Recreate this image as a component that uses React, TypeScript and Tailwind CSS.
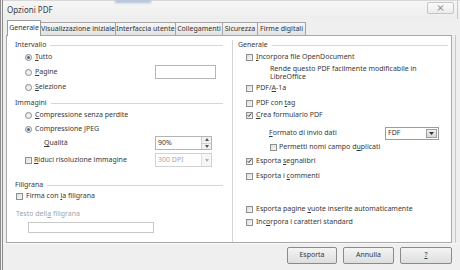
import React from 'react';

const Radio: React.FC<{ on?: boolean }> = ({ on }) => (
  <span className="w-[7px] h-[7px] rounded-full border border-[#8a8a8a] bg-gradient-to-br from-[#e4e4e4] to-[#fafafa] flex items-center justify-center shrink-0">
    {on && <span className="w-[3px] h-[3px] rounded-full bg-[#4a6384]" />}
  </span>
);

const Check: React.FC<{ on?: boolean; dim?: boolean }> = ({ on, dim }) => (
  <span className={`w-[7px] h-[7px] border ${dim ? 'border-[#b8b8b8]' : 'border-[#8e8f8f]'} bg-gradient-to-br from-[#dedede] to-[#f7f7f7] flex items-center justify-center shrink-0`}>
    {on && (
      <svg width="6" height="6" viewBox="0 0 6 6">
        <path d="M0.8 3.2 L2.3 4.7 L5.2 1" stroke="#333" strokeWidth="1.1" fill="none" />
      </svg>
    )}
  </span>
);

const Heading: React.FC<{ label: string; className?: string }> = ({ label, className }) => (
  <div className={`h-[10px] flex items-center ${className || ''}`}>
    <span>{label}</span>
    <span className="flex-1 h-px bg-[#d6d6d6] ml-[4px]" />
  </div>
);

const U: React.FC<{ children: React.ReactNode }> = ({ children }) => <span className="underline underline-offset-[1px]">{children}</span>;

const TabBtn: React.FC<{ label: string; active?: boolean; w: string }> = ({ label, active, w }) =>
  active ? (
    <div className={`${w} h-[16px] -mb-px relative z-10 bg-white border border-b-0 border-[#9a9a9a] flex items-center justify-center`}>
      {label}
    </div>
  ) : (
    <div className={`${w} h-[13px] -ml-px bg-gradient-to-b from-[#f6f6f6] to-[#e2e2e2] border border-b-0 border-[#a6a6a6] flex items-center justify-center`}>
      {label}
    </div>
  );

const Button: React.FC<{ children: React.ReactNode; w: string }> = ({ children, w }) => (
  <div className={`${w} h-[17px] rounded-[2px] border border-[#8a8a8a] bg-gradient-to-b from-[#f4f4f4] to-[#dedede] flex items-center justify-center`}>
    {children}
  </div>
);

export default function App() {
  return (
    <div
      className="w-[460px] h-[270px] bg-[#efefef] flex flex-col border-l-[3px] border-double border-[#8c8c8c] text-[7px] text-[#383838] overflow-hidden"
      style={{ fontFamily: '"Noto Sans", "DejaVu Sans", sans-serif' }}
    >
      {/* title bar */}
      <div className="h-[19px] relative flex items-center justify-between pl-[4px] pr-[2px] border-t border-[#d8d8d8] bg-gradient-to-b from-[#f6f6f6] to-[#ededed]">
        <span className="absolute left-[112px] top-[-1px] w-[36px] h-[3px] bg-[#a9bfdc] blur-[1px]" />
        <span className="text-[8px] text-[#3a3a3a]">Opzioni PDF</span>
        <div className="flex items-start h-full">
          <div className="w-[27px] h-[12px] mt-[1px] rounded-[2px] border border-[#c4c4c4] bg-gradient-to-b from-[#fbfbfb] to-[#ececec] flex items-center justify-center">
            <svg width="7" height="6" viewBox="0 0 7 6">
              <path d="M1 0.5 L6 5.5 M6 0.5 L1 5.5" stroke="#6a6a6a" strokeWidth="1" />
              <path d="M2 0.5 L6 4.5 M5 0.5 L1 4.5" stroke="#b8b8b8" strokeWidth="0.6" />
            </svg>
          </div>
          <span className="w-px h-full ml-[3px] bg-[#c8c8c8]" />
        </div>
      </div>

      {/* tabs + page */}
      <div className="flex-1 flex flex-col pl-[3px] pr-[4px]">
        <div className="h-[16px] flex items-end pl-px pr-[4px] text-[#333]">
          <TabBtn label="Generale" active w="w-[34px]" />
          <TabBtn label="Visualizzazione iniziale" w="w-[76px]" />
          <TabBtn label="Interfaccia utente" w="w-[61px]" />
          <TabBtn label="Collegamenti" w="w-[48px]" />
          <TabBtn label="Sicurezza" w="w-[36px]" />
          <TabBtn label="Firme digitali" w="w-[49px]" />
        </div>

        <div className="h-[208px] flex">
          <div className="flex-1 bg-white border border-[#a8a8a8] flex">
            {/* left column */}
            <div className="w-[225px] flex flex-col pl-[8px] pr-[9px]">
              <Heading label="Intervallo" className="mt-[4px]" />
              <div className="h-[10px] mt-[2px] flex items-center pl-[10px] gap-[3px]">
                <Radio on />
                <span><U>T</U>utto</span>
              </div>
              <div className="h-[14px] mt-[3px] flex items-center pl-[10px] gap-[3px]">
                <Radio />
                <span><U>P</U>agine</span>
                <span className="ml-auto mr-[7px] w-[61px] h-[14px] border border-[#b5b5b5] bg-white" />
              </div>
              <div className="h-[10px] mt-[3px] flex items-center pl-[10px] gap-[3px]">
                <Radio />
                <span><U>S</U>elezione</span>
              </div>

              <Heading label="Immagini" className="mt-[6px]" />
              <div className="h-[10px] mt-[2px] flex items-center pl-[10px] gap-[3px]">
                <Radio />
                <span><U>C</U>ompressione senza perdite</span>
              </div>
              <div className="h-[10px] mt-[4px] flex items-center pl-[10px] gap-[3px]">
                <Radio on />
                <span>Compressione <U>J</U>PEG</span>
              </div>
              <div className="h-[14px] mt-[2px] flex items-center pl-[29px]">
                <span><U>Q</U>ualità</span>
                <div className="ml-auto mr-[11px] w-[57px] h-[14px] border border-[#b5b5b5] bg-white flex">
                  <span className="flex-1 pl-[2px] flex items-center">90%</span>
                  <div className="w-[10px] border-l border-[#cfcfcf] flex flex-col">
                    <span className="flex-1 bg-[#f1f1f1] border-b border-[#d2d2d2] flex items-center justify-center">
                      <svg width="4" height="3" viewBox="0 0 4 3"><path d="M0 3 L2 0 L4 3Z" fill="#555" /></svg>
                    </span>
                    <span className="flex-1 bg-[#f1f1f1] flex items-center justify-center">
                      <svg width="4" height="3" viewBox="0 0 4 3"><path d="M0 0 L2 3 L4 0Z" fill="#555" /></svg>
                    </span>
                  </div>
                </div>
              </div>
              <div className="h-[14px] mt-[3px] flex items-center pl-[10px] gap-[2px]">
                <Check />
                <span><U>R</U>iduci risoluzione immagine</span>
                <div className="ml-auto mr-[11px] w-[57px] h-[14px] border border-[#d2d2d2] bg-white flex text-[#a8a8a8]">
                  <span className="flex-1 pl-[2px] flex items-center">300 DPI</span>
                  <span className="w-[10px] border-l border-[#dedede] bg-[#f6f6f6] flex items-center justify-center">
                    <svg width="4" height="3" viewBox="0 0 4 3"><path d="M0 0 L2 3 L4 0Z" fill="#b0b0b0" /></svg>
                  </span>
                </div>
              </div>

              <Heading label="Filigrana" className="mt-[13px]" />
              <div className="h-[10px] mt-[1px] flex items-center pl-[1px] gap-[3px]">
                <Check />
                <span>Firma con <U>l</U>a filigrana</span>
              </div>
              <div className="h-[10px] mt-[8px] flex items-center pl-[1px] text-[#a4a4a4]">
                <span>Testo dell<U>a</U> filigrana</span>
              </div>
              <span className="mt-[3px] ml-[13px] w-[126px] h-[11px] border border-[#c8c8c8] bg-white" />
            </div>

            <div className="w-px bg-[#d4d4d4] mt-[4px]" />

            {/* right column */}
            <div className="flex-1 flex flex-col pl-[5px] pr-[3px]">
              <Heading label="Generale" className="mt-[4px]" />
              <div className="h-[10px] mt-[2px] flex items-center pl-[8px] gap-[3px]">
                <Check />
                <span><U>I</U>ncorpora file OpenDocument</span>
              </div>
              <div className="mt-[3px] pl-[32px] leading-[8px]">
                <div>Rende questo PDF facilmente modificabile in</div>
                <div>LibreOffice</div>
              </div>
              <div className="h-[10px] mt-[2px] flex items-center pl-[8px] gap-[3px]">
                <Check />
                <span>PDF/<U>A</U>-1a</span>
              </div>
              <div className="h-[10px] mt-[5px] flex items-center pl-[8px] gap-[3px]">
                <Check />
                <span>PDF con <U>t</U>ag</span>
              </div>
              <div className="h-[10px] mt-[2px] flex items-center pl-[8px] gap-[3px]">
                <Check on />
                <span><U>C</U>rea formulario PDF</span>
              </div>
              <div className="h-[14px] mt-[6px] flex items-center pl-[31px]">
                <span><U>F</U>ormato di invio dati</span>
                <div className="ml-auto mr-[9px] w-[54px] h-[13px] border border-[#9c9c9c] bg-white flex">
                  <span className="flex-1 pl-[2px] flex items-center">FDF</span>
                  <span className="w-[11px] m-px border border-[#a0a0a0] bg-gradient-to-b from-[#f0f0f0] to-[#d8d8d8] flex items-center justify-center">
                    <svg width="5" height="3" viewBox="0 0 5 3"><path d="M0 0 L2.5 3 L5 0Z" fill="#333" /></svg>
                  </span>
                </div>
              </div>
              <div className="h-[10px] mt-[2px] flex items-center pl-[32px] gap-[2px]">
                <Check />
                <span>Permetti nomi campo d<U>u</U>plicati</span>
              </div>
              <div className="h-[10px] mt-[4px] flex items-center pl-[8px] gap-[3px]">
                <Check on />
                <span>Esporta <U>s</U>egnalibri</span>
              </div>
              <div className="h-[10px] mt-[5px] flex items-center pl-[8px] gap-[3px]">
                <Check />
                <span>Esporta i <U>c</U>ommenti</span>
              </div>
              <div className="h-[10px] mt-[23px] flex items-center pl-[8px] gap-[3px]">
                <Check />
                <span>Esporta pagine <U>v</U>uote inserite automaticamente</span>
              </div>
              <div className="h-[10px] mt-[3px] flex items-center pl-[8px] gap-[3px]">
                <Check />
                <span>Inc<U>o</U>rpora i caratteri standard</span>
              </div>
            </div>
          </div>
          <span className="w-px ml-[3px] bg-[#c8c8c8]" />
        </div>
      </div>

      {/* buttons */}
      <div className="h-[27px] flex items-start justify-end pt-[3px] pr-[8px] gap-[6px] border-t border-[#f8f8f8]">
        <Button w="w-[50px]">Esporta</Button>
        <Button w="w-[51px]">Annulla</Button>
        <Button w="w-[52px]"><U>?</U></Button>
      </div>
    </div>
  );
}
